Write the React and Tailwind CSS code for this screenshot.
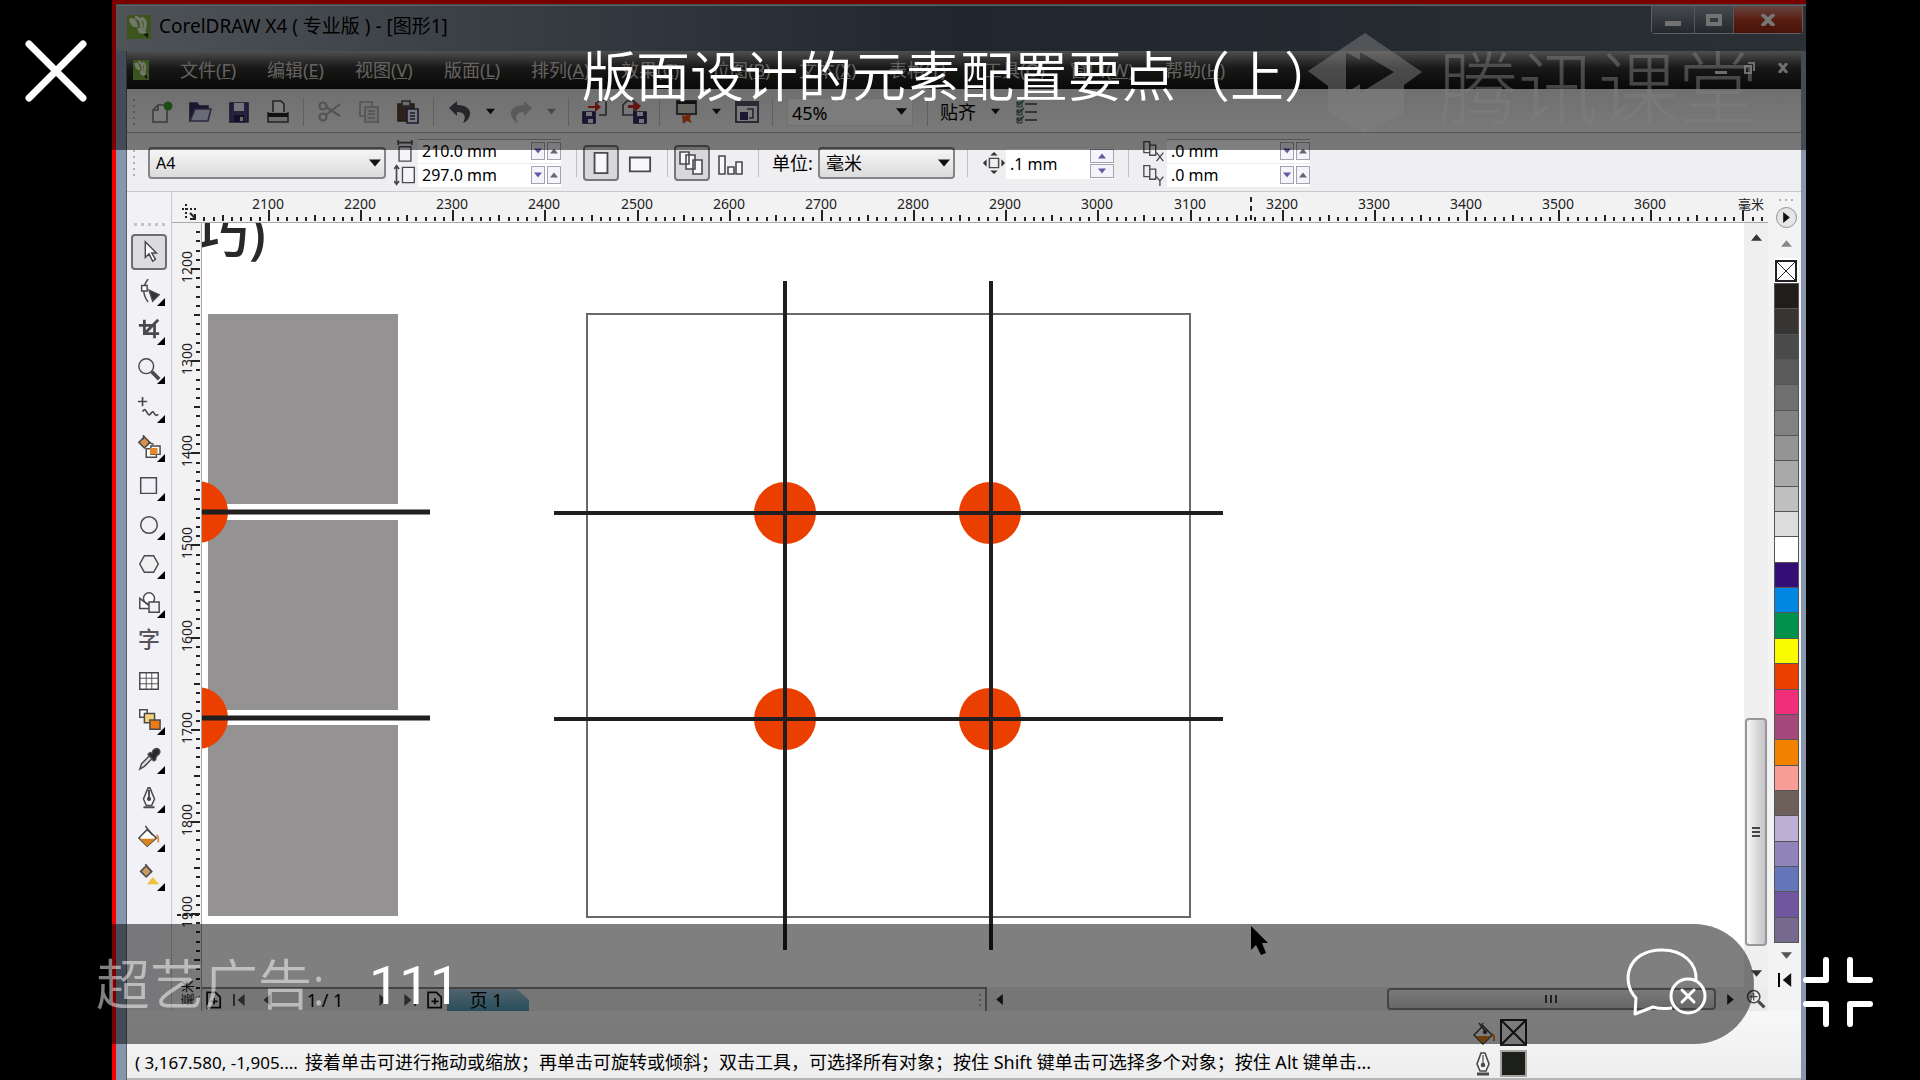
import React, { useState } from 'react';

const MENUS = [
  ['文件', 'F', 'w-[87px]'],
  ['编辑', 'E', 'w-[88px]'],
  ['视图', 'V', 'w-[89px]'],
  ['版面', 'L', 'w-[87px]'],
  ['排列', 'A', 'w-[90px]'],
  ['效果', 'C', 'w-[91px]'],
  ['位图', 'B', 'w-[87px]'],
  ['文本', 'X', 'w-[90px]'],
  ['表格', 'T', 'w-[95px]'],
  ['工具', 'O', 'w-[86px]'],
  ['窗口', 'W', 'w-[95px]'],
  ['帮助', 'H', 'w-[80px]']
];

const SWATCHES = [
  'bg-[#211d1a]', 'bg-[#383634]', 'bg-[#4b4a4a]', 'bg-[#5b5a5a]', 'bg-[#706f6f]',
  'bg-[#838282]', 'bg-[#959494]', 'bg-[#aaa9a9]', 'bg-[#bfbfbf]', 'bg-[#dcdcdc]',
  'bg-[#ffffff]', 'bg-[#330f75]', 'bg-[#0086e3]', 'bg-[#00914b]', 'bg-[#fbfb00]',
  'bg-[#eb3f00]', 'bg-[#f12e79]', 'bg-[#a4487b]', 'bg-[#f08200]', 'bg-[#f99d97]',
  'bg-[#6d605a]', 'bg-[#bbb0d4]', 'bg-[#9083b9]', 'bg-[#6475b8]', 'bg-[#70569f]',
  'bg-[#776a8f]'
];

/* ---------- small shared pieces ---------- */

const Svg = ({ size = 26, children }) => (
  <svg width={size} height={size} viewBox="0 0 26 26" fill="none" stroke="#4a4a4e" strokeWidth="1.6">
    {children}
  </svg>
);

const Triangle = ({ dir = 'down', color = '#111', size = 9 }) => {
  const shapes = {
    down: '0,2 10,2 5,8',
    up: '0,8 10,8 5,2',
    left: '8,0 8,10 2,5',
    right: '2,0 2,10 8,5'
  };
  return (
    <svg width={size} height={size} viewBox="0 0 10 10">
      <polygon points={shapes[dir]} fill={color} />
    </svg>
  );
};

const Sep = () => (
  <span className="w-[13px] shrink-0 flex justify-center">
    <span className="w-px h-7 bg-[#c0bfc2]" />
  </span>
);

const Grip = () => (
  <span className="w-[14px] shrink-0 flex flex-col items-center gap-1">
    {[0, 1, 2, 3, 4].map((i) => (
      <span key={i} className="size-[2px] bg-[#b0b0b4]" />
    ))}
  </span>
);

const ToolButton = ({ label, children }) => (
  <button aria-label={label} className="w-[39px] h-9 shrink-0 flex items-center justify-center">
    {children}
  </button>
);

const DropArrow = ({ label, color }) => (
  <button aria-label={label} className="w-[22px] h-9 shrink-0 flex items-center justify-center">
    <Triangle color={color} />
  </button>
);

const Bucket = () => (
  <Svg>
    <path d="M4 15 13 6l9 9-9 9z" fill="#fff" />
    <path d="M5.500 16h15L13 23.500z" fill="#d9821f" stroke="none" />
    <path d="M9 3l6 8M13 3l-2 4" />
    <circle cx="15" cy="12" r="1.500" fill="#444" />
    <path d="M22 14c3 1 2 5 2 7" stroke="#d9821f" strokeWidth="2" />
  </Svg>
);

const Nib = () => (
  <Svg>
    <path d="M11 2h4l4 11-3 7h-6l-3-7z" fill="#f4f4f4" />
    <path d="M13 4v9" strokeWidth="1.200" />
    <circle cx="13" cy="14" r="1.500" fill="#444" />
    <path d="M7 23h12" strokeWidth="3" />
  </Svg>
);

const AppLogo = ({ className }) => (
  <svg className={className} viewBox="0 0 24 24" preserveAspectRatio="none">
    <rect width="24" height="24" fill="#79a93a" />
    <path d="M2 4c5-3 8 2 9 8C6 13 3 10 2 4z" fill="#e9f0d8" />
    <path d="M8 2c5 1 7 6 6 12M14 3c5 2 5 7 3 12" stroke="#e9f0d8" strokeWidth="3" fill="none" />
    <path d="M10 13l8 1 2 6-8-2z" fill="#e9f0d8" />
    <path d="M16 19l5 4v-5z" fill="#1c2a10" />
  </svg>
);

/* ---------- window chrome ---------- */

const TitleBar = () => (
  <header className="h-[46px] shrink-0 flex items-center pb-1 pl-[11px] bg-linear-to-r from-[#9ea7b0] via-[#3f4d5c] to-[#56606a] border-t border-[#c0c6cc]">
    <AppLogo className="w-6 h-6" />
    <h1 className="ml-2 text-[19px] text-black whitespace-nowrap">CorelDRAW X4 ( 专业版 ) - [图形1]</h1>
    <div className="ml-auto mr-[3px] self-start h-7 flex rounded-b border border-t-0 border-[#b8bfc6]">
      <button aria-label="最小化" className="w-[43px] flex items-center justify-center bg-linear-to-b from-[#8d959e] to-[#49525c] border-r border-[#aab]">
        <span className="w-4 h-[5px] mt-2 bg-[#e5e5e5]" />
      </button>
      <button aria-label="最大化" className="w-[39px] flex items-center justify-center bg-linear-to-b from-[#8d959e] to-[#49525c] border-r border-[#aab]">
        <span className="w-4 h-3 border-4 border-[#e5e5e5]" />
      </button>
      <button aria-label="关闭" className="w-[68px] flex items-center justify-center bg-linear-to-b from-[#c98a80] via-[#b43a24] to-[#8e2712]">
        <svg width="14" height="12" viewBox="0 0 14 12" stroke="#eee" strokeWidth="4">
          <path d="M1 0l12 12M13 0L1 12" />
        </svg>
      </button>
    </div>
  </header>
);

const MenuBar = () => (
  <nav className="h-[38px] shrink-0 flex items-center pl-[6px] bg-linear-to-b from-[#a0a0a0] via-[#30302f] via-45% to-[#121210] text-lg text-[#c9c5c1]">
    <AppLogo className="w-4 h-5" />
    <div className="ml-[31px] flex">
      {MENUS.map(([name, key, width]) => (
        <button key={key} className={`${width} shrink-0 text-left whitespace-nowrap`}>
          {name}(<span className="underline">{key}</span>)
        </button>
      ))}
    </div>
    <div className="ml-auto mr-[6px] pb-1 flex items-center gap-4 text-[#ddd]">
      <button aria-label="最小化文档"><span className="block w-3 h-[3px] mt-2 bg-[#ddd]" /></button>
      <button aria-label="还原文档">
        <svg width="12" height="14" viewBox="0 0 12 14" fill="none" stroke="#ddd" strokeWidth="2">
          <path d="M2 5h6v7H2zM5 2h6v8" />
        </svg>
      </button>
      <button aria-label="关闭文档" className="w-6 flex justify-center">
        <svg width="10" height="10" viewBox="0 0 10 10" stroke="#ddd" strokeWidth="3">
          <path d="M1 0l8 10M9 0L1 10" />
        </svg>
      </button>
    </div>
  </nav>
);

const StandardBar = () => {
  const [zoom, setZoom] = useState('45%');
  return (
    <div className="h-11 shrink-0 flex items-center pt-[2px] bg-linear-to-b from-[#e0e0e0] to-[#f4f3f4] border-b border-[#a8a8aa] text-lg text-black">
      <Grip />
      <ToolButton label="新建">
        <Svg>
          <path d="M5 11l5-5h9v17H5z" fill="#f4f4f4" stroke="#77777c" />
          <path d="M5 11h5V6" stroke="#77777c" />
          <circle cx="20" cy="7" r="4.500" fill="#3b9a2f" stroke="none" />
        </Svg>
      </ToolButton>
      <ToolButton label="打开">
        <Svg>
          <path d="M3 22V4h7l2 3h9v5" fill="#35305c" stroke="#35305c" />
          <path d="M3 22l5-12h16l-3 12z" fill="#d6d6ee" stroke="#55507c" />
        </Svg>
      </ToolButton>
      <ToolButton label="保存">
        <Svg>
          <path d="M4 4h18v19H4z" fill="#4a4580" stroke="#35305c" />
          <path d="M8 4h10v8H8z" fill="#e8e8f4" stroke="none" />
          <path d="M8 16h10v7H8z" fill="#26224a" stroke="none" />
          <path d="M14 18h3v4h-3z" fill="#ddd" stroke="none" />
        </Svg>
      </ToolButton>
      <ToolButton label="打印">
        <Svg>
          <path d="M8 15V2h8l3 3v10" fill="#f6f6f6" />
          <path d="M3 13v10h20V13" fill="#d8d8dc" />
          <path d="M3 14h20v4H3z" fill="#222" stroke="none" />
        </Svg>
      </ToolButton>
      <Sep />
      <ToolButton label="剪切">
        <Svg>
          <g stroke="#a7a7aa" strokeWidth="2.200">
            <circle cx="6" cy="7" r="3.500" />
            <circle cx="6" cy="18" r="3.500" />
            <path d="M9 8l14 9M9 16L23 5" />
          </g>
        </Svg>
      </ToolButton>
      <ToolButton label="复制">
        <Svg>
          <g stroke="#a7a7aa">
            <path d="M4 3h12v14H4z" />
            <path d="M9 8h13v15H9z" fill="#dedede" />
            <path d="M12 12h7M12 15h7M12 19h7" />
          </g>
        </Svg>
      </ToolButton>
      <ToolButton label="粘贴">
        <Svg>
          <path d="M3 5h16v17H3z" fill="#5c4638" stroke="#4c3628" />
          <path d="M7 2h8v5H7z" fill="#ddd" />
          <path d="M12 10h11v14H12z" fill="#f2f2f8" stroke="#33336a" />
          <path d="M15 14h5M15 17h5M15 20h5" stroke="#33336a" />
        </Svg>
      </ToolButton>
      <Sep />
      <ToolButton label="撤消">
        <Svg>
          <path d="M2 9l8-7v4c9 0 14 4 13 10-1 4-4 7-7 8 3-5 3-11-6-11v4z" fill="#4d4d55" stroke="none" />
        </Svg>
      </ToolButton>
      <DropArrow label="撤消列表" />
      <ToolButton label="重做">
        <Svg>
          <path d="M24 9l-8-7v4C7 6 2 10 3 16c1 4 4 7 7 8-3-5-3-11 6-11v4z" fill="#b4b4b8" stroke="none" />
        </Svg>
      </ToolButton>
      <DropArrow label="重做列表" color="#8e8e90" />
      <Sep />
      <ToolButton label="导入">
        <Svg>
          <path d="M14 12V5l4-4h6v15h-7" fill="#eee" />
          <path d="M1 13h12v11H1z" fill="#35306a" stroke="#25204a" />
          <path d="M4 13h6v4H4zM6 20h5v4H6z" fill="#e4e4f0" stroke="none" />
          <path d="M6 7h7V3l6 5-6 5V9H6z" fill="#d0281c" stroke="none" />
        </Svg>
      </ToolButton>
      <ToolButton label="导出">
        <Svg>
          <path d="M2 16V6l4-4h7v14z" fill="#eee" />
          <path d="M13 13h12v11H13z" fill="#35306a" stroke="#25204a" />
          <path d="M16 13h6v4h-6zM18 20h5v4h-5z" fill="#e4e4f0" stroke="none" />
          <path d="M7 6h7V2l6 5-6 6V9H7z" fill="#d0281c" stroke="none" />
        </Svg>
      </ToolButton>
      <Sep />
      <ToolButton label="应用程序启动器">
        <Svg>
          <path d="M4 2h19v13H4z" fill="#c9cec4" strokeWidth="2" />
          <path d="M4 2h19v3H4z" fill="#222" stroke="none" />
          <path d="M9 16l3 1 2-2 4 1-1 4 2 4-5-2-4 3z" fill="#e0501a" stroke="none" />
        </Svg>
      </ToolButton>
      <DropArrow label="启动器列表" />
      <ToolButton label="欢迎屏幕">
        <Svg>
          <path d="M2 3h22v20H2z" fill="#f4f4f8" stroke="#55556a" strokeWidth="2" />
          <path d="M2 4h22v3H2z" fill="#55556a" stroke="none" />
          <path d="M6 13h8v8H6z" fill="#35306a" stroke="none" />
          <path d="M13 10h6v9h-4" />
        </Svg>
      </ToolButton>
      <Sep />
      <div className="relative mx-2 w-[126px] h-7">
        <select
          aria-label="缩放级别"
          value={zoom}
          onChange={(e) => setZoom(e.target.value)}
          className="appearance-none w-full h-full pl-1 bg-[#f8f8f8] border border-[#dcdcdc]"
        >
          <option>45%</option>
          <option>100%</option>
        </select>
        <span className="absolute right-[6px] top-2 pointer-events-none"><Triangle size={11} /></span>
      </div>
      <Sep />
      <button className="w-[50px] pl-[6px] text-left whitespace-nowrap">贴齐</button>
      <DropArrow label="贴齐列表" />
      <ToolButton label="选项">
        <Svg>
          <path d="M12 5h12M12 13h12M12 21h12" stroke="#6a6a6e" strokeWidth="2" />
          <path d="M4 3l2 3 5-5M4 11l2 3 5-5M4 19l2 3 5-5" stroke="#2e7a4a" />
          <path d="M4 3h5v5H4zM4 11h5v5H4zM4 19h5v5H4z" strokeWidth="1" />
        </Svg>
      </ToolButton>
    </div>
  );
};

const SideSpin = ({ label }) => (
  <span className="flex gap-[2px] mr-px">
    <button aria-label={`${label} 减`} className="w-[14px] h-[18px] flex items-center justify-center border border-[#a3a3b0] bg-[#f4f4fa]">
      <Triangle size={8} color="#6259a4" />
    </button>
    <button aria-label={`${label} 加`} className="w-[14px] h-[18px] flex items-center justify-center border border-[#a3a3b0] bg-[#f4f4fa]">
      <Triangle size={8} dir="up" color="#66666c" />
    </button>
  </span>
);

const MeasureRow = ({ label, value }) => {
  const [val, setVal] = useState(value);
  return (
    <div className="h-6 flex items-center bg-white border-b border-[#ececee]">
      <input
        aria-label={label}
        value={val}
        onChange={(e) => setVal(e.target.value)}
        className="w-[113px] h-6 pl-1 text-base bg-transparent"
      />
      <SideSpin label={label} />
    </div>
  );
};

const Combo = ({ id, label, options, className }) => (
  <div className={`relative h-8 ${className}`}>
    <select
      id={id}
      aria-label={label}
      className="appearance-none w-full h-full pl-[6px] rounded-sm border-2 border-[#858588] bg-linear-to-b from-[#f6f6f6] to-[#dcdcdd]"
    >
      {options.map((o) => <option key={o}>{o}</option>)}
    </select>
    <span className="absolute right-[5px] top-[10px] pointer-events-none"><Triangle size={12} /></span>
  </div>
);

const PropertyBar = () => (
  <div className="h-[59px] shrink-0 flex items-center pt-[2px] bg-[#efeef0] border-b border-[#c9c9cb] text-lg text-black">
    <Grip />
    <Combo label="纸张类型" options={['A4', 'A3']} className="ml-[7px] w-[238px] text-base" />
    <div className="ml-2 w-6 flex flex-col gap-[2px]">
      <Svg size={22}><path d="M6 8h14v17H6z" fill="#f4f4fa" /><path d="M5 3h16M5 0v6M21 0v6" strokeWidth="2" /></Svg>
      <Svg size={22}><path d="M10 4h14v18H10z" fill="#f4f4fa" /><path d="M3 3v20M0 6l3-4 3 4M0 20l3 4 3-4" strokeWidth="2" /></Svg>
    </div>
    <div className="w-[143px] border-t border-[#a8a8ac]">
      <MeasureRow label="纸张宽度" value="210.0 mm" />
      <MeasureRow label="纸张高度" value="297.0 mm" />
    </div>
    <span className="ml-[9px]"><Sep /></span>
    <button aria-label="纵向" aria-pressed="true" className="w-9 h-9 flex items-center justify-center rounded border-2 border-[#77777b] bg-[#d8d8da]">
      <Svg size={24}><path d="M6 2h14v22H6z" fill="#f8f8fc" strokeWidth="2" /></Svg>
    </button>
    <button aria-label="横向" className="w-[42px] h-9 flex items-center justify-center">
      <Svg size={24}><path d="M2 7h22v15H2z" fill="#f8f8fc" strokeWidth="2" /></Svg>
    </button>
    <Sep />
    <button aria-label="所有页面" aria-pressed="true" className="w-9 h-9 flex items-center justify-center rounded border-2 border-[#77777b] bg-[#d8d8da]">
      <Svg><path d="M1 2h9v12H1zM7 5h9v14H7zM14 10h9v14h-9z" fill="#f8f8fc" /></Svg>
    </button>
    <button aria-label="当前页面" className="w-[42px] h-9 flex items-center justify-center">
      <Svg><path d="M1 6h6v18H1zM10 17h6v7h-6zM18 12h6v12h-6z" fill="#f8f8fc" /></Svg>
    </button>
    <Sep />
    <label htmlFor="unit" className="ml-[7px] w-[46px] whitespace-nowrap">单位:</label>
    <Combo id="unit" options={['毫米', '厘米']} className="w-[137px]" />
    <span className="ml-[6px]"><Sep /></span>
    <span className="ml-2 w-6">
      <Svg size={24}>
        <path d="M8 8h10v10H8z" />
        <path d="M9 5l4-4 4 4zM9 21l4 4 4-4zM5 9l-4 4 4 4zM21 9l4 4-4 4z" fill="#333" stroke="none" />
      </Svg>
    </span>
    <div className="flex items-center h-8 bg-white border-t border-[#dcdcde]">
      <input aria-label="微调偏移" defaultValue=".1 mm" className="w-[84px] h-7 pl-1 text-base bg-transparent" />
      <span className="flex flex-col gap-px">
        <button aria-label="增加偏移" className="w-6 h-[14px] flex items-center justify-center border border-[#a3a3b0] bg-[#f4f4fa]">
          <Triangle size={8} dir="up" color="#6259a4" />
        </button>
        <button aria-label="减少偏移" className="w-6 h-[14px] flex items-center justify-center border border-[#a3a3b0] bg-[#f4f4fa]">
          <Triangle size={8} color="#6259a4" />
        </button>
      </span>
    </div>
    <span className="ml-2"><Sep /></span>
    <div className="ml-2 w-6 flex flex-col gap-[2px]">
      <Svg size={22}><path d="M1 2h7v13H1zM8 6h7v12H8zM16 15l8 10M24 15l-8 10" /></Svg>
      <Svg size={22}><path d="M1 2h7v13H1zM8 6h7v12H8zM16 15l4 5 4-5M20 20v6" /></Svg>
    </div>
    <div className="w-[143px] border-t border-[#a8a8ac]">
      <MeasureRow label="再制距离 X" value=".0 mm" />
      <MeasureRow label="再制距离 Y" value=".0 mm" />
    </div>
  </div>
);

/* ---------- toolbox ---------- */

const TOOLS = [
  ['挑选', <path d="M9 2v17l4-4 4 8 3-2-4-7h5z" fill="#fff" />],
  ['形状', <><path d="M12 0C6 8 6 17 12 25" /><path d="M5 7h6v6H5z" fill="#fff" /><path d="M13 12l11 5-7 7z" fill="#333" /></>],
  ['裁剪', <path d="M2 8h17v14M8 2v15h16M8 17L23 2" strokeWidth="3" />],
  ['缩放', <><circle cx="10" cy="10" r="8" fill="#f0f0f4" /><path d="M16 16l8 8" strokeWidth="4" /></>],
  ['手绘', <path d="M6 1v10M1 6h10M6 17c4-8 5 8 9 2s3 5 8 1" strokeWidth="1.800" />],
  ['智能填充', <><path d="M2 8l6-6 6 6-6 6z" fill="#d9924a" /><path d="M7 0v5M12 8l6 2" /><path d="M10 15h11v9H10zM15 12h10v9H15z" fill="#fff" /><path d="M14 14h8v7h-8z" fill="#e5882a" stroke="none" /></>],
  ['矩形', <path d="M4 4h17v17H4z" fill="#f2f0f6" />],
  ['椭圆形', <circle cx="13" cy="13" r="9" fill="#f2f0f2" />],
  ['多边形', <path d="M8 4h10l5 9-5 9H8l-5-9z" fill="#f0f0f0" />],
  ['基本形状', <><path d="M3 8v11h14z" fill="#fff" /><circle cx="13" cy="8" r="6" fill="#fff" /><path d="M13 12h11v11H13z" fill="#f2f0f6" /></>],
  ['文本', null],
  ['表格', <><path d="M3 4h20v18H3z" fill="#fff" /><path d="M3 10h20M3 16h20M10 4v18M16 4v18" strokeWidth="1" /></>],
  ['交互式', <><path d="M3 2h8v8H3z" fill="#fff" /><path d="M8 6h11v10H8z" fill="#f6cf7a" /><path d="M14 13h11v10H14z" fill="#ee7a16" /></>],
  ['滴管', <><path d="M3 24l2-6 9-9 3 3-9 9z" fill="#ddd" /><path d="M12 8l2-2 2 1c1-4 4-6 7-5 3 2 2 6-2 8l-1 4-2 1z" fill="#26282c" /></>],
  ['轮廓', <><path d="M12 2h2l5 12-3 7h-6l-3-7z" fill="#f4f4f4" /><path d="M13 4v9M7 23h12" strokeWidth="2" /><circle cx="13" cy="14" r="1.500" fill="#444" /></>],
  ['填充', <><path d="M2 14l9-9 10 9-10 9z" fill="#fff" /><path d="M3 15h17l-9 8z" fill="#d9821f" stroke="none" /><path d="M9 1l8 10" /><path d="M21 11c3 1 2 5 2 8" stroke="#e0893a" strokeWidth="2" /></>],
  ['交互式填充', <><path d="M4 8l6-6 6 6-6 6z" fill="#c99a62" /><path d="M9 0l7 9" /><path d="M11 22l6-8 7 8z" fill="#f0c040" stroke="none" /></>]
];

const Toolbox = () => {
  const [active, setActive] = useState('挑选');
  return (
    <aside className="w-[45px] shrink-0 flex flex-col items-center bg-[#f1f1f6] border-r border-[#c9c9cb]">
      <div className="h-[42px] flex items-end gap-1 pb-2">
        {[0, 1, 2, 3, 4].map((i) => <span key={i} className="size-[3px] bg-[#c4c4c6]" />)}
      </div>
      {TOOLS.map(([name, icon]) => (
        <button
          key={name}
          aria-label={name}
          onClick={() => setActive(name)}
          className={`relative w-9 shrink-0 flex items-center justify-center rounded ${
            active === name ? 'h-9 mb-px border-2 border-[#6e6e70] bg-[#dcdcde]' : 'h-[39px]'
          }`}
        >
          {icon ? <Svg size={24}>{icon}</Svg> : <span className="pb-2 text-[22px] leading-none font-medium text-[#55555a]">字</span>}
          {!['挑选', '文本', '表格'].includes(name) && (
            <svg className="absolute right-[2px] bottom-[4px]" width="8" height="8" viewBox="0 0 8 8">
              <polygon points="8,0 8,8 0,8" fill="#000" />
            </svg>
          )}
        </button>
      ))}
    </aside>
  );
};

/* ---------- rulers and drawing ---------- */

const RULER_STEP = 92.15;

const ticks = (from, to, origin) => {
  const step = RULER_STEP / 10;
  const list = [];
  for (let n = Math.ceil((from - origin) / step); origin + n * step < to; n++) {
    list.push({ pos: Math.round(origin + n * step), major: n % 10 === 0, mid: n % 5 === 0 });
  }
  return list;
};

const TopRuler = () => (
  <svg className="w-full h-[31px] shrink-0 bg-[#f2f2f3] border-b border-[#a9a9ab]" fontSize="14" fill="#222">
    {ticks(32, 1590, 97).map((t) => (
      <rect key={t.pos} x={t.pos - 1} y={t.major ? 18 : t.mid ? 23 : 25} width="2" height={t.major ? 11 : t.mid ? 6 : 4} />
    ))}
    {Array.from({ length: 16 }, (_, i) => (
      <text key={i} x={Math.round(96 + i * RULER_STEP)} y="17" textAnchor="middle">{2100 + i * 100}</text>
    ))}
    <text x="1566" y="17" fontSize="13">毫米</text>
    <path d="M1079 5v25" stroke="#222" strokeWidth="2" strokeDasharray="5 4" />
    {/* ruler origin handle */}
    <path d="M10 17h14M14 12v16" stroke="#222" strokeWidth="2" strokeDasharray="2 2" />
    <path d="M18 21l5 5M23 22v5h-5" stroke="#222" strokeWidth="2" fill="none" />
  </svg>
);

const SideRuler = () => (
  <svg className="w-[30px] h-full shrink-0 bg-[#f2f2f3] border-r border-[#a9a9ab]" fontSize="14" fill="#222">
    {ticks(4, 780, 46).map((t) => (
      <rect key={t.pos} y={t.pos - 1} x={t.major ? 19 : t.mid ? 22 : 24} height="2" width={t.major ? 9 : t.mid ? 6 : 4} />
    ))}
    {Array.from({ length: 8 }, (_, i) => {
      const y = Math.round(44 + i * RULER_STEP);
      return (
        <text key={i} x="20" y={y} textAnchor="middle" transform={`rotate(-90 20 ${y})`}>{1200 + i * 100}</text>
      );
    })}
    <text x="20" y="770" textAnchor="middle" fontSize="13" transform="rotate(-90 20 770)">毫米</text>
    <path d="M5 692h24" stroke="#222" strokeWidth="2" strokeDasharray="4 2" />
  </svg>
);

const Drawing = () => (
  <svg className="flex-1 min-w-0 h-full bg-white">
    <g transform="translate(-202 -223)">
      <text x="195" y="253" fontSize="54" fontWeight="500" fill="#2b2829">巧)</text>
      <g fill="#949292">
        <rect x="208" y="314" width="190" height="190" />
        <rect x="208" y="520" width="190" height="190" />
        <rect x="208" y="725" width="190" height="191" />
      </g>
      <rect x="587" y="314" width="603" height="603" fill="none" stroke="#6a6869" strokeWidth="2" />
      <g fill="#eb3f00">
        <circle cx="197" cy="512" r="31" />
        <circle cx="197" cy="718" r="31" />
        <circle cx="785" cy="513" r="31" />
        <circle cx="990" cy="513" r="31" />
        <circle cx="785" cy="719" r="31" />
        <circle cx="990" cy="719" r="31" />
      </g>
      <g stroke="#211e1f" strokeWidth="4">
        <path d="M200 512h230M200 718h230" strokeWidth="5" />
        <path d="M554 513h669M554 719h669M785 281v669M991 281v669" />
      </g>
      <path d="M1251 926v24l5-5 5 10 5-2-4-10h6z" fill="#000" />
    </g>
  </svg>
);

const VerticalScroll = () => (
  <div className="w-[24px] shrink-0 flex flex-col items-center bg-[#efefef]">
    <button aria-label="向上滚动" className="h-7 flex items-center"><Triangle dir="up" size={11} color="#333" /></button>
    <div className="flex-1 w-full flex flex-col px-px">
      <div className="flex-[470_1_0%]" />
      <div className="flex-[225_1_0%] flex flex-col items-center justify-center gap-[2px] border-2 border-[#97979b] rounded-sm bg-linear-to-r from-[#f6f6f6] to-[#c4c4c6]">
        <span className="w-2 h-[2px] bg-[#444]" />
        <span className="w-2 h-[2px] bg-[#444]" />
        <span className="w-2 h-[2px] bg-[#444]" />
      </div>
      <div className="flex-[13_1_0%]" />
    </div>
    <button aria-label="向下滚动" className="h-7 flex items-center"><Triangle size={11} color="#333" /></button>
  </div>
);

const PageIcon = () => (
  <Svg size={18}>
    <path d="M3 2h12l7 7v15H3z" strokeWidth="2.500" stroke="#111" />
    <path d="M13 10v9M8 15h10" strokeWidth="2.500" stroke="#111" />
  </Svg>
);

const PageBar = () => (
  <div className="h-6 shrink-0 flex bg-[#ececec] text-black">
    <div className="w-[785px] shrink-0 flex items-center border-t-2 border-r-2 border-[#88888a]">
      <button aria-label="前插页面" className="w-[22px] ml-px flex justify-center"><PageIcon /></button>
      <button aria-label="首页" className="w-[30px] flex justify-center items-center">
        <span className="w-[2px] h-3 bg-[#555]" /><Triangle dir="left" size={12} color="#555" />
      </button>
      <button aria-label="上一页" className="w-6 flex justify-center"><Triangle dir="left" size={12} color="#555" /></button>
      <span className="w-[92px] text-center text-lg leading-none">1 / 1</span>
      <button aria-label="下一页" className="w-6 flex justify-center"><Triangle dir="right" size={12} color="#555" /></button>
      <button aria-label="末页" className="w-7 flex justify-center items-center">
        <Triangle dir="right" size={12} color="#555" /><span className="w-[2px] h-3 bg-[#555]" />
      </button>
      <button aria-label="后插页面" className="w-[24px] flex justify-center"><PageIcon /></button>
      <button className="w-[82px] h-full pr-1 bg-linear-to-b from-[#a4c8d8] to-[#4c9cb8] text-lg leading-none [clip-path:polygon(0_0,85%_0,100%_50%,100%_100%,0_100%)]">
        页 1
      </button>
      <span className="ml-auto mr-1 flex flex-col gap-[3px]">
        <span className="size-[2px] bg-[#aaa]" />
        <span className="size-[2px] bg-[#aaa]" />
        <span className="size-[2px] bg-[#aaa]" />
      </span>
    </div>
    <button aria-label="向左滚动" className="w-6 shrink-0 flex items-center justify-center"><Triangle dir="left" size={11} color="#222" /></button>
    <div className="flex-1 flex">
      <div className="flex-[377_1_0%]" />
      <div className="flex-[326_1_0%] my-px flex items-center justify-center gap-[3px] border-2 border-[#88888a] rounded-sm bg-linear-to-b from-[#f4f4f4] to-[#cfcfd0]">
        <span className="w-[2px] h-2 bg-[#444]" />
        <span className="w-[2px] h-2 bg-[#444]" />
        <span className="w-[2px] h-2 bg-[#444]" />
      </div>
    </div>
    <button aria-label="向右滚动" className="w-7 shrink-0 flex items-center justify-center"><Triangle dir="right" size={11} color="#222" /></button>
    <button aria-label="导航器" className="w-6 shrink-0 flex items-center justify-center">
      <Svg size={20}>
        <circle cx="10" cy="10" r="8" strokeWidth="2" />
        <path d="M10 5v10M5 10h10" />
        <path d="M16 16l8 8" strokeWidth="4" />
      </Svg>
    </button>
  </div>
);

const Palette = () => (
  <aside className="w-[33px] shrink-0 flex flex-col items-center pl-[3px] bg-[#f3f3f4]">
    <div className="h-[15px] flex items-center gap-1">
      {[0, 1, 2].map((i) => <span key={i} className="size-[2px] bg-[#b0b0b2]" />)}
    </div>
    <button aria-label="调色板菜单" className="size-[21px] flex items-center justify-center rounded-full border border-[#909092] bg-[#e6e6e8]">
      <Triangle dir="right" size={11} />
    </button>
    <button aria-label="上一行颜色" className="h-[30px] flex items-center"><Triangle dir="up" size={11} color="#888" /></button>
    <button aria-label="无颜色" className="size-[25px] shrink-0 flex items-center justify-center bg-white">
      <svg width="22" height="22" viewBox="0 0 22 22" fill="none" stroke="#222" strokeWidth="2">
        <path d="M1 1h20v20H1z" />
        <path d="M1 1l20 20M21 1L1 21" strokeWidth="1" />
      </svg>
    </button>
    <div className="flex-1 w-[25px] flex flex-col border-x border-t border-[#555559]">
      {SWATCHES.map((color, i) => (
        <button key={color} aria-label={`颜色 ${i + 1}`} className={`flex-1 border-b border-[#555559] ${color}`} />
      ))}
    </div>
    <button aria-label="下一行颜色" className="h-6 flex items-center"><Triangle size={11} color="#555" /></button>
    <button aria-label="展开调色板" className="h-[26px] flex items-center">
      <span className="w-[2px] h-[14px] bg-black" /><Triangle dir="left" size={14} />
    </button>
    <div className="h-[18px]" />
  </aside>
);

const StatusBar = () => (
  <footer className="h-[69px] shrink-0 flex items-end bg-linear-to-b from-[#f8f8f8] to-[#ededed] border-b-2 border-[#b5b5b7] text-[18px] text-black">
    <p className="w-[1330px] pl-2 pb-px flex whitespace-nowrap">
      <span className="w-[170px] shrink-0 text-[17px] leading-7">( 3,167.580, -1,905....</span>
      <span>接着单击可进行拖动或缩放；再单击可旋转或倾斜；双击工具，可选择所有对象；按住 Shift 键单击可选择多个对象；按住 Alt 键单击...</span>
    </p>
    <div className="ml-[13px] grid grid-cols-[30px_27px] gap-y-1 pb-px items-center">
      <Bucket />
      <svg width="27" height="27" viewBox="0 0 27 27" fill="none" stroke="#222" strokeWidth="2">
        <path d="M1 1h25v25H1z" />
        <path d="M1 1l25 25M26 1L1 26" />
      </svg>
      <Nib />
      <span className="size-[27px] bg-[#1d1f1a] border-2 border-[#a5a5a0]" />
    </div>
  </footer>
);

/* ---------- player overlay ---------- */

const Watermark = () => (
  <div className="absolute top-[33px] right-[162px] flex items-start opacity-50 pointer-events-none">
    <svg width="114" height="100" viewBox="0 0 114 100" className="mr-4">
      <path fillRule="evenodd" d="M57 0l57 39-18 13v28L57 100 20 79V53L0 38zM38 19v41l14-9v9l34-21-34-20v8z" fill="#fff" />
    </svg>
    <span className="pt-1 text-[80px] leading-[100px] font-light text-white whitespace-nowrap">腾讯课堂</span>
  </div>
);

const PlayerOverlay = () => (
  <>
    {/* the watermark belongs to the video, so the dim bar goes over it */}
    <Watermark />
    <div className="absolute inset-x-0 top-0 h-[150px] bg-black/50" />
    <button aria-label="关闭" className="absolute left-[24px] top-[38px]">
      <svg width="64" height="66" viewBox="0 0 64 66" stroke="#fff" strokeWidth="7" strokeLinecap="round">
        <path d="M5 6l54 54M59 6L5 60" />
      </svg>
    </button>
    <h2 className="absolute inset-x-0 top-[36px] text-center text-[54px] leading-[80px] font-[350] text-white whitespace-nowrap">
      版面设计的元素配置要点（上）
    </h2>
    <div className="absolute left-0 right-[166px] bottom-9 h-[120px] pl-[96px] pr-[47px] flex items-center rounded-r-full bg-black/50">
      <p className="flex items-center text-[54px] leading-[80px] whitespace-nowrap">
        <span className="w-[273px] font-[350] text-white/50">超艺广告:</span>
        <span className="pt-1 text-white font-['Roboto',sans-serif]">111</span>
      </p>
      <button aria-label="关闭弹幕" className="ml-auto pb-1">
        <svg width="82" height="70" viewBox="0 0 82 70" fill="none" stroke="#fff" strokeWidth="3">
          <path d="M47 61c-7 1-13 1-19-1L10 67l1-16C-4 36 1 3 37 3c22 0 35 14 34 30" strokeLinejoin="round" />
          <circle cx="63" cy="49" r="17" />
          <path d="M57 43l12 12M69 43L57 55" strokeLinecap="round" />
        </svg>
      </button>
    </div>
    <button aria-label="退出全屏" className="absolute right-[47px] bottom-[53px]">
      <svg width="70" height="70" viewBox="0 0 70 70" fill="none" stroke="#fff" strokeWidth="6" strokeLinecap="round" strokeLinejoin="round">
        <path d="M3 23h20V3M47 3v20h20M3 47h20v20M47 67V47h20" />
      </svg>
    </button>
  </>
);

export default function App() {
  return (
    <main className="relative h-screen min-h-[900px] overflow-hidden bg-black pl-[112px] pr-[114px] font-['Noto_Sans','Noto_Sans_CJK_SC',sans-serif]">
      <div className="h-full border-t-4 border-l-4 border-[#f40000]">
        <div className="h-full flex flex-col pt-[1px] bg-[#8796ad]">
          <TitleBar />
          <div className="flex-1 min-h-0 ml-[10px] mr-[5px] flex flex-col border-l border-[#55606c]">
            <MenuBar />
            <StandardBar />
            <PropertyBar />
            <div className="flex-1 min-h-0 flex">
              <Toolbox />
              <div className="flex-1 min-w-0 flex flex-col">
                <TopRuler />
                <div className="flex-1 min-h-0 flex">
                  <SideRuler />
                  <div className="flex-1 min-w-0 flex flex-col">
                    <div className="flex-1 min-h-0 flex">
                      <Drawing />
                      <VerticalScroll />
                    </div>
                    <PageBar />
                  </div>
                </div>
              </div>
              <Palette />
            </div>
            <StatusBar />
          </div>
        </div>
      </div>
      <PlayerOverlay />
    </main>
  );
}
